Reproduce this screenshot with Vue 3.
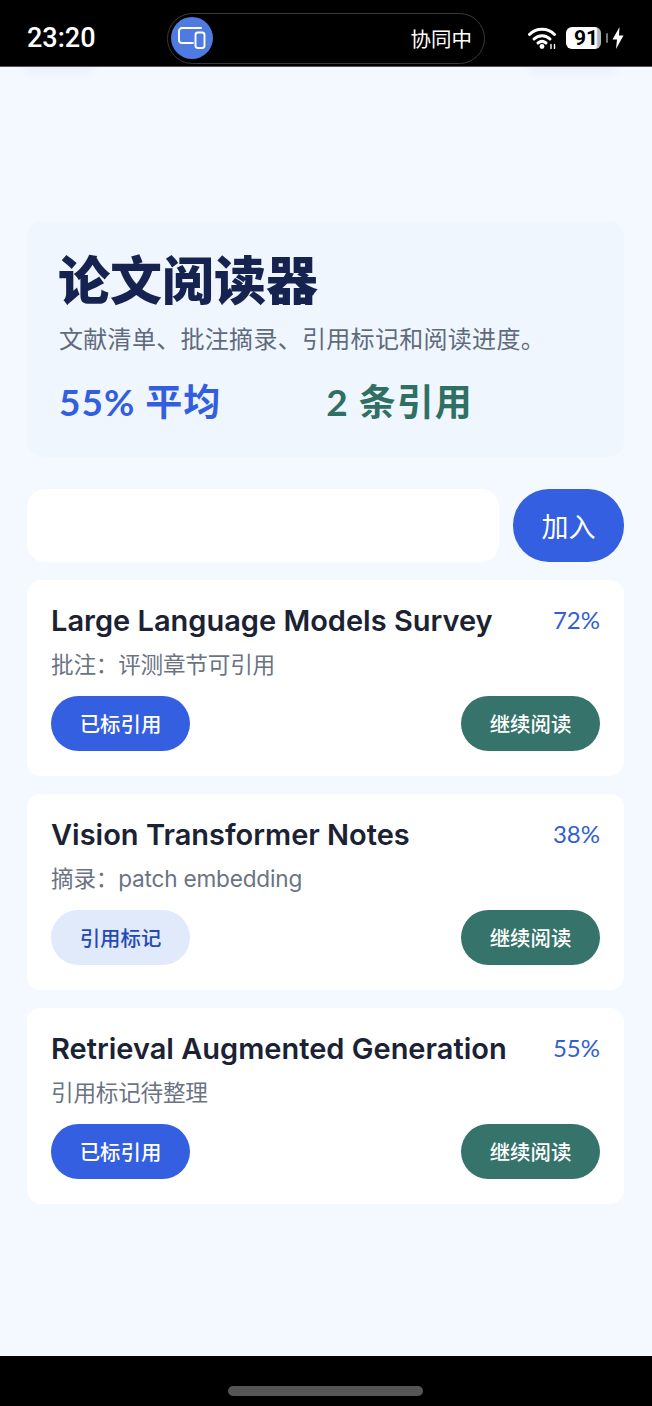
<template>
  <div class="screen">
    <header class="status">
      <span class="time">23:20</span>
      <div class="island">
        <span class="island__icon">
          <svg width="30" height="24" viewBox="0 0 30 24" fill="none" stroke="#fff" stroke-width="1.9">
            <path d="M24 2 H5 a3 3 0 0 0 -3 3 V14 a3 3 0 0 0 3 3 H16" stroke-linecap="round" />
            <rect x="18.5" y="6.5" width="9" height="15.5" rx="2.5" />
          </svg>
        </span>
        <span class="island__text">协同中</span>
      </div>
      <div class="status__right">
        <svg class="wifi" width="29" height="22" viewBox="0 0 29 22" fill="none" stroke="#fff" stroke-width="3" stroke-linecap="round">
          <path d="M1.5 7.5 C8 0.5 20 0.5 26.5 7.5" />
          <path d="M6 12 C10.5 7.5 17.5 7.5 22 12" />
          <path d="M10 16 C12.5 14 15.5 14 18 16" />
          <circle cx="14" cy="19.5" r="2.4" fill="#fff" stroke="none" />
          <path d="M23 17.5 V21.5 M26.5 17.5 V21.5" stroke-width="1.4" />
        </svg>
        <div class="battery">
          <span class="battery__body">91</span>
          <span class="battery__cap"></span>
        </div>
        <svg class="bolt" width="12" height="22" viewBox="0 0 12 22" fill="#fff">
          <path d="M7.5 0 L0.5 12.5 H5 L4 22 L11.5 8.5 H7 Z" />
        </svg>
      </div>
    </header>

    <main class="main">
      <span class="blur blur--left"></span>
      <span class="blur blur--right"></span>

      <section class="hero">
        <h1 class="hero__title">论文阅读器</h1>
        <p class="hero__desc">文献清单、批注摘录、引用标记和阅读进度。</p>
        <div class="hero__stats">
          <span class="stat stat--blue">{{ average }}% 平均</span>
          <span class="stat stat--green">{{ citeCount }} 条引用</span>
        </div>
      </section>

      <form class="add" @submit.prevent>
        <input class="add__input" type="text" />
        <button class="add__button" type="submit">加入</button>
      </form>

      <article v-for="paper in papers" :key="paper.title" class="paper">
        <div class="paper__head">
          <h2 class="paper__title">{{ paper.title }}</h2>
          <span class="paper__percent">{{ paper.percent }}%</span>
        </div>
        <p class="paper__note">{{ paper.note }}</p>
        <div class="paper__actions">
          <button class="pill" :class="paper.cited ? 'pill--blue' : 'pill--light'">
            {{ paper.cited ? "已标引用" : "引用标记" }}
          </button>
          <button class="pill pill--green">继续阅读</button>
        </div>
      </article>
    </main>

    <footer class="nav">
      <span class="nav__handle"></span>
    </footer>
  </div>
</template>

<script setup>
const papers = [
  { title: "Large Language Models Survey", percent: 72, note: "批注：评测章节可引用", cited: true },
  { title: "Vision Transformer Notes", percent: 38, note: "摘录：patch embedding", cited: false },
  { title: "Retrieval Augmented Generation", percent: 55, note: "引用标记待整理", cited: true },
];

const average = 55;
const citeCount = papers.filter((p) => p.cited).length;
</script>

<style>
html,
body {
  margin: 0;
  background: #000;
}
</style>

<style scoped>
.screen {
  display: flex;
  flex-direction: column;
  width: 652px;
  height: 1406px;
  overflow: hidden;
  font-family: "Lato", "Noto Sans CJK SC", sans-serif;
}
.status {
  display: flex;
  align-items: center;
  flex: none;
  height: 67px;
  padding: 10px 28px 0 27px;
  box-sizing: border-box;
  background: #000;
  color: #fff;
  border-bottom: 1px solid #555;
}
.time {
  width: 140px;
  font-size: 27px;
  font-weight: 500;
  font-family: "Roboto", sans-serif;
}
.island {
  display: flex;
  align-items: center;
  justify-content: space-between;
  width: 318px;
  height: 51px;
  padding: 0 12px 0 3px;
  box-sizing: border-box;
  border: 1px solid #3a3a3a;
  border-radius: 26px;
}
.island__icon {
  display: flex;
  align-items: center;
  justify-content: center;
  width: 42px;
  height: 42px;
  border-radius: 50%;
  background: #4f7be0;
}
.island__text {
  font-size: 20.5px;
}
.status__right {
  display: flex;
  align-items: center;
  margin-left: auto;
}
.wifi {
  margin-right: 9px;
}
.bolt {
  margin-left: 4px;
}
.battery {
  display: flex;
  align-items: center;
  gap: 5px;
}
.battery__body {
  width: 35px;
  height: 22px;
  padding-right: 3px;
  box-sizing: border-box;
  border-radius: 6px;
  background: linear-gradient(90deg, #fff 86%, #b5b5b5 91%);
  color: #000;
  font-size: 21px;
  font-weight: 700;
  line-height: 22px;
  text-align: right;
  font-family: "Roboto", sans-serif;
}
.battery__cap {
  width: 2px;
  height: 10px;
  background: #777;
  border-radius: 1px;
}
.main {
  position: relative;
  display: flex;
  flex-direction: column;
  flex: 1;
  padding: 154px 28px 0 27px;
  background: #f4f8ff;
}
.blur {
  position: absolute;
  top: -14px;
  height: 14px;
  border-radius: 12px;
  box-shadow: 0 4px 12px rgba(30, 50, 110, 0.05);
}
.blur--left {
  left: 24px;
  width: 70px;
}
.blur--right {
  right: 34px;
  width: 90px;
}
.hero {
  height: 236px;
  padding: 28px 32px 0;
  box-sizing: border-box;
  border-radius: 16px;
  background: #f0f6fd;
}
.hero__title {
  margin: 0 0 0 -1px;
  font-size: 52px;
  font-weight: 900;
  line-height: 62px;
  color: #16224f;
}
.hero__desc {
  margin: 11px 0 0;
  font-size: 24px;
  letter-spacing: 0.3px;
  line-height: 34px;
  color: #5f6b7d;
}
.hero__stats {
  display: flex;
  gap: 105px;
  margin-top: 22px;
}
.stat {
  font-size: 37px;
  font-weight: 700;
  letter-spacing: 1px;
  line-height: 48px;
}
.stat--blue {
  color: #335fdf;
}
.stat--green {
  color: #2f6f64;
}
.add {
  display: flex;
  gap: 14px;
  margin: 32px 0 18px;
}
.add__input {
  flex: 1;
  min-width: 0;
  height: 73px;
  padding: 0;
  box-sizing: border-box;
  border: none;
  border-radius: 18px;
  background: #fff;
}
.add__button {
  width: 111px;
  height: 73px;
  padding: 0;
  border: none;
  border-radius: 36px;
  background: #335fe0;
  color: #fff;
  font-family: inherit;
  font-size: 27px;
}
.paper {
  height: 196px;
  margin-bottom: 18px;
  padding: 20px 24px 0;
  box-sizing: border-box;
  border-radius: 14px;
  background: #fff;
}
.paper__head {
  display: flex;
  align-items: center;
  justify-content: space-between;
}
.paper__title {
  margin: 0;
  font-family: "Inter", "Noto Sans CJK SC", sans-serif;
  font-size: 29px;
  font-weight: 600;
  line-height: 42px;
  color: #1a2233;
}
.paper__percent {
  margin-top: -3px;
  font-size: 24px;
  color: #335fd0;
}
.paper__note {
  margin: 4px 0 0;
  font-family: "Inter", "Noto Sans CJK SC", sans-serif;
  font-size: 22.6px;
  letter-spacing: -0.2px;
  line-height: 38px;
  color: #6a7383;
}
.paper__actions {
  display: flex;
  justify-content: space-between;
  margin-top: 12px;
}
.pill {
  width: 139px;
  height: 55px;
  padding: 0 0 2px;
  border: none;
  border-radius: 28px;
  font-family: inherit;
  font-size: 20.4px;
  font-weight: 500;
}
.pill--blue {
  background: #335fe0;
  color: #fff;
}
.pill--light {
  background: #e0eafb;
  color: #2449b5;
}
.pill--green {
  background: #35736b;
  color: #fff;
}
.nav {
  display: flex;
  justify-content: center;
  flex: none;
  height: 50px;
  padding-right: 2px;
  box-sizing: border-box;
  background: #000;
}
.nav__handle {
  width: 195px;
  height: 10px;
  margin-top: 30px;
  border-radius: 5px;
  background: #555;
}
</style>
